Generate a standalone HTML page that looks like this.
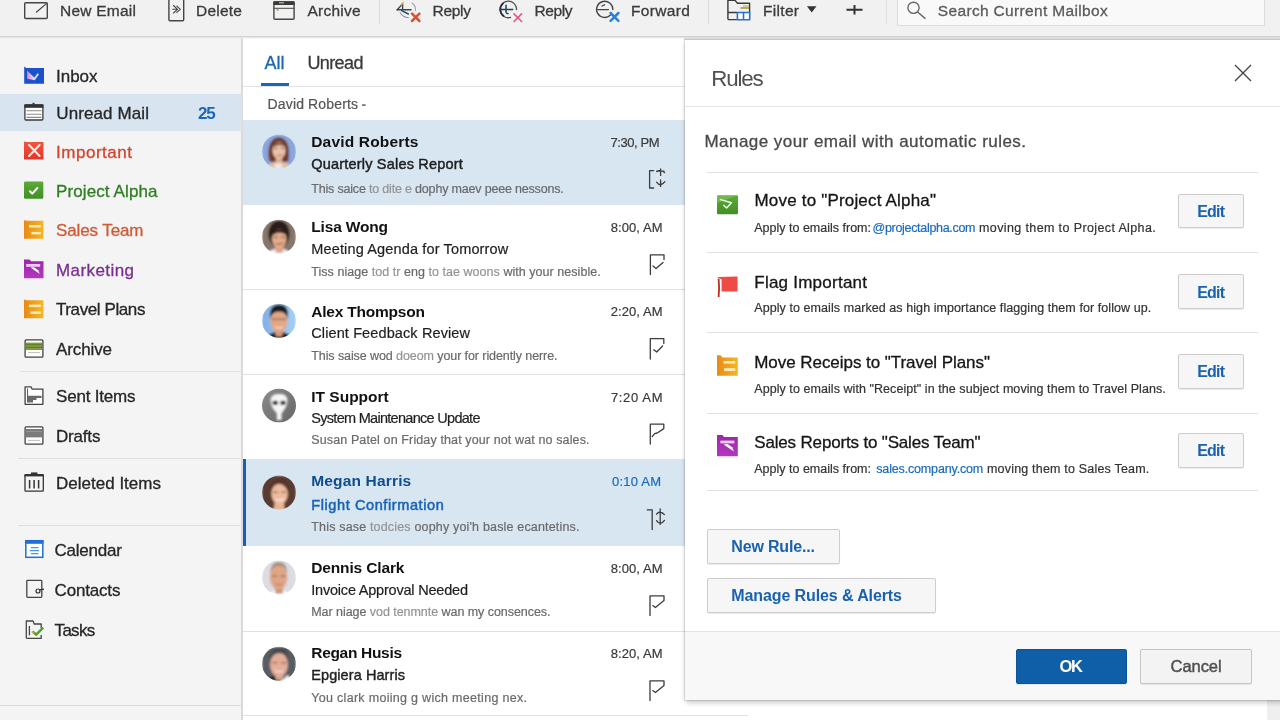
<!DOCTYPE html>
<html lang="en"><head><meta charset="utf-8"><title>Mail - Rules</title>
<style>
html,body{margin:0;padding:0}
body{width:1280px;height:720px;overflow:hidden;position:relative;background:#fff;font-family:'Liberation Sans',sans-serif}
.a{position:absolute}
.t{position:absolute;white-space:pre;line-height:1;font-family:'Liberation Sans',sans-serif}
svg{position:absolute;overflow:visible}
#toolbar{left:0;top:0;width:1280px;height:37px;background:#f1f1f1}
#tbshadow{left:0;top:36px;width:1280px;height:3px;background:linear-gradient(#cdcdcd 0,#d9d9d9 34%,rgba(232,232,232,.55) 66%,rgba(255,255,255,0) 100%)}
#sidebar{left:0;top:38px;width:242px;height:682px;background:#f4f4f4}
#sbline{left:241px;top:38px;width:2px;height:682px;background:#dadada}
#list{left:243px;top:38px;width:442px;height:682px;background:#fff}
.sep{position:absolute;height:1px;background:#e1e1e1}
.row{position:absolute;left:243px;width:442px}
.sel{background:#d8e6f2}
#dialog{left:685px;top:40px;width:600px;height:660px;background:#fff;box-shadow:0 0 0 1px rgba(0,0,0,.08),-1px 0 3px rgba(0,0,0,.07),1px 3px 5px rgba(0,0,0,.20)}
#dfoot{left:685px;top:631px;width:595px;height:69px;background:#f8f8f8;border-top:1px solid #e3e3e3;box-sizing:border-box}
.btn{position:absolute;box-sizing:border-box;background:#f6f6f6;border:1px solid #cdcdcd;border-radius:2px;box-shadow:0 1px 1px rgba(0,0,0,.08)}
.av{position:absolute;width:34px;height:34px;border-radius:50%;overflow:hidden}
#txt{position:absolute;left:0;top:0;width:1280px;height:720px;will-change:transform}
.g{color:#939393;-webkit-text-stroke-color:#939393}

</style></head>
<body>
<!-- base panes -->
<div class="a" id="sidebar"></div>
<div class="a" id="sbline"></div>
<div class="a" id="list"></div>
<div class="a" style="left:685px;top:38px;width:595px;height:682px;background:#fff"></div>
<div class="a" style="left:1267px;top:700px;width:13px;height:20px;background:#efefef"></div>
<div class="a" id="toolbar"></div>
<div class="a" style="left:684px;top:37px;width:596px;height:3px;background:linear-gradient(#d8d8d8,#e4e4e4)"></div>
<div class="a" id="tbshadow"></div>
<!-- toolbar separators / search -->
<div class="a" style="left:379px;top:0;width:1px;height:24px;background:#dcdcdc"></div>
<div class="a" style="left:708px;top:0;width:1px;height:24px;background:#dcdcdc"></div>
<div class="a" style="left:886px;top:0;width:1px;height:24px;background:#e2e2e2"></div>
<div class="a" style="left:897px;top:-2px;width:368px;height:28px;box-sizing:border-box;background:#f9f9f9;border:1px solid #dcdcdc"></div>

<!-- sidebar selection + separators -->
<div class="a" style="left:0;top:94px;width:242px;height:37px;background:#d8e5f1"></div>
<div class="sep" style="left:20px;top:371px;width:222px;background:#e0e0e0"></div>
<div class="sep" style="left:18px;top:458px;width:224px;background:#e0e0e0"></div>
<div class="sep" style="left:18px;top:525px;width:224px;background:#e0e0e0"></div>
<div class="sep" style="left:0;top:705px;width:242px;background:#dcdcdc"></div>

<!-- list -->
<div class="a" style="left:261px;top:83px;width:28px;height:3px;background:#1a66b8"></div>
<div class="sep" style="left:243px;top:86px;width:442px;background:#e2e2e2"></div>
<div class="row sel" style="top:120px;height:85px"></div>
<div class="sep" style="left:243px;top:289px;width:442px"></div>
<div class="sep" style="left:243px;top:374px;width:442px"></div>
<div class="row sel" style="top:459px;height:87px"></div>
<div class="a" style="left:243px;top:459px;width:3px;height:87px;background:#1a5fb0"></div>
<div class="sep" style="left:243px;top:631px;width:442px"></div>
<div class="sep" style="left:243px;top:715px;width:505px"></div>

<!-- dialog -->
<div class="a" id="dialog"></div>
<div class="sep" style="left:685px;top:106px;width:595px;background:#e4e4e4"></div>
<div class="sep" style="left:707px;top:172px;width:551px"></div>
<div class="sep" style="left:707px;top:252px;width:551px"></div>
<div class="sep" style="left:707px;top:332px;width:551px"></div>
<div class="sep" style="left:707px;top:413px;width:551px"></div>
<div class="sep" style="left:707px;top:490px;width:551px"></div>
<div class="a" id="dfoot"></div>
<div class="btn" style="left:1178px;top:194px;width:66px;height:34px"></div>
<div class="btn" style="left:1178px;top:274px;width:66px;height:35px"></div>
<div class="btn" style="left:1178px;top:354px;width:66px;height:35px"></div>
<div class="btn" style="left:1178px;top:433px;width:66px;height:35px"></div>
<div class="btn" style="left:707px;top:529px;width:133px;height:35px"></div>
<div class="btn" style="left:707px;top:578px;width:229px;height:35px"></div>
<div class="btn" style="left:1016px;top:649px;width:111px;height:35px;background:#0f5fa8;border-color:#0c5496"></div>
<div class="btn" style="left:1140px;top:649px;width:112px;height:35px;background:#f3f3f3;border-color:#c6c6c6"></div>
<svg style="left:1235px;top:65px" width="16" height="16" viewBox="0 0 16 16"><path d="M0 0L16 16M16 0L0 16" stroke="#444" stroke-width="1.3" fill="none"/></svg>
<svg class="a" style="left:0;top:0" width="1280" height="720" viewBox="0 0 1280 720">
<defs>
<filter id="bl" x="-10%" y="-10%" width="120%" height="120%"><feGaussianBlur stdDeviation="0.85"/></filter>
<clipPath id="cp"><circle cx="17" cy="17" r="17"/></clipPath>
<linearGradient id="gA4" x1="0" x2="1" y1="0" y2="1"><stop offset="0" stop-color="#8c8c8c"/><stop offset="1" stop-color="#666"/></linearGradient>
<linearGradient id="gA3" x1="0" x2="1" y1="0" y2="0"><stop offset="0" stop-color="#7fb0e6"/><stop offset="1" stop-color="#a8d0f2"/></linearGradient>
</defs>
<!-- 1 David Roberts -->
<g transform="translate(262,134.6)" clip-path="url(#cp)"><g filter="url(#bl)">
 <rect width="34" height="34" fill="#8aa7dd"/>
 <path d="M7 26 C4.5 11 9.5 2.6 16.6 2.6 C24 2.6 28.6 10 26.6 26 C24 29 9.5 29 7 26Z" fill="#6e3a2c"/>
 <ellipse cx="17" cy="36" rx="14" ry="9" fill="#e6c0a2"/>
 <ellipse cx="16.4" cy="33" rx="4.2" ry="5" fill="#efe4e2"/>
 <rect x="13.6" y="22" width="6.6" height="6.4" fill="#dcae94"/>
 <ellipse cx="17" cy="15.8" rx="6.5" ry="8.4" fill="#ecc2ab"/>
 <path d="M10.2 13 C11.5 7 21.5 6 23.6 12.6 C20 9.6 14 9.8 10.2 13Z" fill="#6e3a2c"/>
 <path d="M12 13.8 H15.4 M18.8 13.8 H22.2" stroke="#7a4a3c" stroke-width="1.1"/>
 <path d="M15.4 20.4 Q17.6 21.8 19.8 19.8" stroke="#b45f56" stroke-width="1.1" fill="none"/>
</g></g>
<!-- 2 Lisa Wong -->
<g transform="translate(262,219.8)" clip-path="url(#cp)"><g filter="url(#bl)">
 <rect width="34" height="34" fill="#87766b"/>
 <ellipse cx="17" cy="14" rx="10.6" ry="13.4" fill="#2a1b1a"/>
 <ellipse cx="17" cy="37" rx="14" ry="8" fill="#f3f3f6"/>
 <path d="M13 26 H21.6 L21 32 Q17.5 34.5 13.6 32Z" fill="#dfa383"/>
 <ellipse cx="17.2" cy="19" rx="7.3" ry="9.2" fill="#e4ac8c"/>
 <path d="M9 17 C9.5 8.5 24.5 7.5 25.6 17 C22 11.5 13.5 11.5 9 17Z" fill="#2a1b1a"/>
 <path d="M11.8 17.4 H15.6 M19 17.4 H22.8" stroke="#5a3a30" stroke-width="1.1"/>
 <path d="M14.2 23.4 Q17.4 25.8 20.8 23.2" stroke="#a2554c" stroke-width="1.1" fill="none"/>
</g></g>
<!-- 3 Alex Thompson -->
<g transform="translate(262,303.8)" clip-path="url(#cp)"><g filter="url(#bl)">
 <rect width="34" height="34" fill="url(#gA3)"/>
 <ellipse cx="17" cy="37" rx="14" ry="9" fill="#1e2227"/>
 <path d="M12.6 26 H21.4 L20 32.6 H14Z" fill="#d89a78"/>
 <ellipse cx="16.8" cy="17.6" rx="8.5" ry="10.8" fill="#e3a785"/>
 <path d="M8 15 C7 4 12 0.8 17 0.8 C23 0.8 27 4 25.8 15 C24.5 9.6 21 8 17 8 C13 8 9.4 9.6 8 15Z" fill="#1e1e21"/>
 <path d="M9.6 15.4 H15.2 M18.6 15.4 H24.4 M15.2 15.4 H18.6" stroke="#7a523f" stroke-width="1"/>
 <path d="M13.4 23 Q16.8 25.6 20.6 23" stroke="#f6e6dc" stroke-width="1.3" fill="none"/>
</g></g>
<!-- 4 IT Support -->
<g transform="translate(262,388.6)" clip-path="url(#cp)">
 <rect width="34" height="34" fill="url(#gA4)"/>
 <g filter="url(#bl)">
 <path d="M8.6 12 C8.6 7 12 5.4 17 5.4 C22.5 5.4 25.4 7 25.4 12 C25.4 18 21.5 22 19.6 25 V31.4 H14.8 V25 C12.5 22 8.6 18 8.6 12Z" fill="#f6f6f6"/>
 <rect x="10.4" y="12.2" width="5.6" height="4.2" rx="1.9" fill="#1c1c1c"/>
 <rect x="18.2" y="12.2" width="5.6" height="4.2" rx="1.9" fill="#1c1c1c"/>
 </g>
</g>
<!-- 5 Megan Harris -->
<g transform="translate(262,475.6)" clip-path="url(#cp)"><g filter="url(#bl)">
 <rect width="34" height="34" fill="#5a3a30"/>
 <path d="M12.6 27 H22 L22.6 35 H11.6Z" fill="#e8b494"/>
 <ellipse cx="17.6" cy="18.2" rx="8.2" ry="11" fill="#ecba9c"/>
 <path d="M7.6 20 C6.5 7 13 3 18 3 C24.5 3 28.8 9 27.4 21 C25.5 12.5 21.5 8.4 17 8.4 C12.6 8.4 9.6 12 7.6 20Z" fill="#58362c"/>
 <path d="M11.4 16.6 H15.6 M19.6 16.6 H23.8" stroke="#6a4034" stroke-width="1.1"/>
 <path d="M13.4 23.2 Q17.6 26.6 21.8 23" stroke="#fbeee8" stroke-width="1.4" fill="none"/>
</g></g>
<!-- 6 Dennis Clark -->
<g transform="translate(262,560.4)" clip-path="url(#cp)"><g filter="url(#bl)">
 <rect width="34" height="34" fill="#dcdce2"/>
 <ellipse cx="17" cy="38" rx="14" ry="8" fill="#f6f7fa"/>
 <path d="M12.6 26 H21.4 L20.4 33.4 H13.8Z" fill="#d2946f"/>
 <ellipse cx="16.6" cy="17" rx="8.8" ry="12.2" fill="#dfa686"/>
 <path d="M8.4 13 C8 4.5 12.6 1.6 16.6 1.6 C21.5 1.6 25.4 4.5 24.8 13 C23.5 7.4 20.5 5.6 16.6 5.6 C13 5.6 9.8 7.4 8.4 13Z" fill="#a8917e"/>
 <path d="M10 15.6 H15.2 M18.4 15.6 H23.6" stroke="#8a5a44" stroke-width="1.1"/>
 <path d="M13 23.2 Q16.6 25.8 20.4 23.2" stroke="#b56d58" stroke-width="1.1" fill="none"/>
</g></g>
<!-- 7 Regan Husis -->
<g transform="translate(262,646.8)" clip-path="url(#cp)"><g filter="url(#bl)">
 <rect width="34" height="34" fill="#585c63"/>
 <ellipse cx="15" cy="38" rx="14" ry="9" fill="#25272c"/>
 <path d="M17 36 L26 28 L30 36Z" fill="#f2f3f6"/>
 <path d="M12.6 26 H22 L21 32.6 Q17 34.5 13.6 32.6Z" fill="#d8a088"/>
 <ellipse cx="17" cy="18" rx="9" ry="12" fill="#e4ae98"/>
 <path d="M8 14 C7.6 4 12.6 0.6 17.4 0.6 C23 0.6 27 4 26.2 14 C24.6 8 21.4 6.4 17.4 6.4 C13.6 6.4 9.8 8 8 14Z" fill="#4a4a4f"/>
 <path d="M10 16 H15.4 M19 16 H24.4" stroke="#7a5246" stroke-width="1.1"/>
 <path d="M13.2 23.6 Q17 26.2 21 23.6" stroke="#f6ebe6" stroke-width="1.2" fill="none"/>
</g></g>
</svg>
<svg class="a" style="left:0;top:0" width="1280" height="720" viewBox="0 0 1280 720">
<defs>
<linearGradient id="gOr" x1="0" x2="1" y1="0" y2="0"><stop offset="0" stop-color="#e88a18"/><stop offset="1" stop-color="#f6b622"/></linearGradient>
<linearGradient id="gRed" x1="0" x2="0" y1="0" y2="1"><stop offset="0" stop-color="#f2563f"/><stop offset="1" stop-color="#e2352b"/></linearGradient>
<linearGradient id="gGr" x1="0" x2="0" y1="0" y2="1"><stop offset="0" stop-color="#5aab36"/><stop offset="1" stop-color="#3f8f26"/></linearGradient>
<linearGradient id="gPu" x1="0" x2="0" y1="0" y2="1"><stop offset="0" stop-color="#9a28a8"/><stop offset="1" stop-color="#b436c0"/></linearGradient>
<linearGradient id="gPk" x1="0" x2="1" y1="0" y2="0"><stop offset="0" stop-color="#e08ad6"/><stop offset=".55" stop-color="#f4e4fb"/><stop offset="1" stop-color="#ffffff"/></linearGradient>
</defs>
<!-- ===== toolbar icons ===== -->
<g fill="none" stroke="#454545" stroke-width="1.4" stroke-linecap="round" stroke-linejoin="round">
 <rect x="24.7" y="2.7" width="22.6" height="15.8" rx="1"/>
 <path d="M36.5 12 L46.5 3.6" stroke-width="1.2"/>
 <rect x="168.9" y="-1" width="14.8" height="21.7" rx="1"/>
 <path d="M173.5 5.5 L177.5 9.3 L173.5 13 M176.8 6.2 L180.3 9.3 L176.8 12.4 M172.8 9.3 H177" stroke-width="1.1"/>
 <rect x="273.9" y="2" width="20.2" height="17.3" rx="1"/>
 <path d="M274 8.3 H294" stroke-width="1"/>
</g>
<rect x="273.4" y="1.3" width="21.2" height="3.7" fill="#3a3a3a"/>
<rect x="279" y="2.2" width="5" height="1.2" fill="#bbb"/>
<circle cx="277.6" cy="9.8" r="1.1" fill="#8db82c"/>
<!-- reply 1 -->
<g fill="none" stroke-linecap="round">
 <path d="M412 3 Q416.2 6 415.4 10.6" stroke="#9aa2aa" stroke-width="1.1"/>
 <path d="M400.2 12.8 Q403 17.4 408.4 17.8" stroke="#8a939b" stroke-width="1.1"/>
 <path d="M397.2 9.8 H411" stroke="#2f4858" stroke-width="1.5"/>
 <path d="M397.2 9.8 L402.6 3.9 V9.4" stroke="#2f4858" stroke-width="1.4" stroke-linejoin="round"/>
 <path d="M401.6 10.6 L408.4 14" stroke="#2f4858" stroke-width="1.4"/>
 <path d="M401.4 4.8 L403.2 2.8" stroke="#e8a23a" stroke-width="1.6"/>
 <path d="M412 13.6 L419.4 21 M419.4 13.6 L412 21" stroke="#d9532f" stroke-width="2.5"/>
</g>
<!-- reply 2 -->
<g fill="none" stroke-linecap="round">
 <path d="M516.6 9.6 A8.3 8.3 0 1 0 510.6 17.4" stroke="#4a4f55" stroke-width="1.3"/>
 <path d="M503 3.4 A8.3 8.3 0 0 0 503.6 16" stroke="#2c2f33" stroke-width="1.7"/>
 <path d="M500.4 9.5 H512.8" stroke="#2c3e4c" stroke-width="1.4"/>
 <path d="M506 5.4 V12 Q506.2 13.6 508 13.6" stroke="#1f4d66" stroke-width="1.6"/>
 <path d="M514 13.9 L521.6 21.5 M521.6 13.9 L514 21.5" stroke="#da5a86" stroke-width="1.6"/>
</g>
<!-- forward -->
<g fill="none" stroke-linecap="round">
 <path d="M610.5 15 A8.1 8.1 0 1 1 612.8 9.6" stroke="#454545" stroke-width="1.4"/>
 <path d="M597.5 9.6 H608.5 M602 6 L604.5 4.8" stroke="#454545" stroke-width="1.3"/>
 <path d="M610.6 13 L618.4 20.8 M618.4 13 L610.6 20.8" stroke="#2a80dc" stroke-width="2.5"/>
</g>
<!-- filter -->
<g fill="none" stroke-linejoin="round">
 <path d="M727.9 19.6 V0.4 H735 L737.5 3.2 H749.6 V12.5" stroke="#3a3a3a" stroke-width="1.4"/>
 <path d="M727.9 12.5 H737 M727.9 19.6 H737" stroke="#3a3a3a" stroke-width="1.4"/>
 <rect x="737.4" y="12.5" width="12.3" height="7.2" stroke="#2b6fd2" stroke-width="1.6" fill="#fff"/>
 <path d="M743.5 12.5 V19.7" stroke="#2b6fd2" stroke-width="1.6"/>
 <path d="M740.5 8 H749" stroke="#9a9a32" stroke-width="1.5"/>
 <path d="M743 6 H749" stroke="#c9a23a" stroke-width="1"/>
</g>
<polygon points="806.9,6.3 816.5,6.3 811.7,12.6" fill="#333"/>
<path d="M846.5 9.8 H862.5 M854.5 5 V14.5" stroke="#333" stroke-width="2" fill="none"/>
<g fill="none" stroke="#676767" stroke-width="1.4" stroke-linecap="round"><circle cx="913.5" cy="7.8" r="5.6"/><path d="M917.6 12 L925 18.4"/></g>

<!-- ===== sidebar icons ===== -->
<!-- inbox -->
<path d="M24.2 66.6 L26.4 68 H44 V83.8 H24.2 Z" fill="#1a52cb"/>
<path d="M27 70.6 L34.4 77.4 L37.6 73.2 L38.9 74.2 L34.8 80.3 L27.2 78.8 Z" fill="url(#gPk)" fill-opacity=".9"/>
<!-- unread mail -->
<g>
 <rect x="24.9" y="105" width="18" height="15" rx="1" fill="#fff" stroke="#3a3a3a" stroke-width="1.3"/>
 <rect x="24.3" y="104.4" width="19.2" height="3.4" fill="#333"/>
 <rect x="32.5" y="102.8" width="2" height="2" fill="#333"/>
 <path d="M26.5 110.8 H41.5 M26.5 114.2 H41.5 M26.5 117.4 H41.5" stroke="#8a8a8a" stroke-width="1.1"/>
</g>
<!-- important -->
<path d="M24 141.6 L26.5 142 H43.5 V159.5 H24 Z" fill="url(#gRed)"/>
<path d="M29 145 L39.6 156 M39.6 145 L29 156" stroke="#fff" stroke-width="2" stroke-linecap="round" opacity=".92"/>
<!-- project alpha -->
<rect x="24" y="181.6" width="19.3" height="17.2" rx="1.2" fill="url(#gGr)"/>
<path d="M30 191.3 L32.2 193.6 L37.4 188" stroke="#fff" stroke-width="2" fill="none" stroke-linecap="round" stroke-linejoin="round"/>
<!-- sales team -->
<path d="M24 220.2 L27 220.8 H43.4 V238.8 H24 Z" fill="url(#gOr)"/>
<rect x="29" y="225" width="11.8" height="2.5" fill="#fdeab5"/><rect x="31.4" y="231.9" width="9.4" height="2.5" fill="#fdeab5"/>
<!-- marketing -->
<path d="M24 259.6 H29.5 L31 261.2 H43.5 V278.2 H24 Z" fill="url(#gPu)"/>
<rect x="26.2" y="264" width="14" height="2.8" fill="#f0c8f2"/>
<path d="M30.5 267.5 L39.8 274 L38.2 270.2 L34 267.2 Z" fill="#fff"/>
<!-- travel plans -->
<path d="M24 299.6 L27 300.2 H43.4 V318.3 H24 Z" fill="url(#gOr)"/>
<rect x="29" y="304.6" width="11.8" height="2.5" fill="#fdeab5"/><rect x="30.4" y="311.4" width="10.4" height="2.5" fill="#fdeab5"/>
<!-- archive -->
<rect x="25.1" y="339.9" width="17.8" height="17.3" rx="1" fill="#fff" stroke="#414141" stroke-width="1.3"/>
<rect x="26" y="342.6" width="16" height="7.4" fill="#7f9c3c"/>
<path d="M26 344.6 H42 M26 347.4 H42" stroke="#5e7d2a" stroke-width="1"/>
<path d="M28 352.6 H40" stroke="#bdbdbd" stroke-width="1"/>
<!-- sent items -->
<path d="M25.1 404.3 V386.8 H31 L32.2 389.2 H42.9 V404.3 Z" fill="#fff" stroke="#414141" stroke-width="1.3" stroke-linejoin="round"/>
<path d="M27.6 388.5 V402.5" stroke="#555" stroke-width="1"/>
<path d="M28 395.8 H41.6 V398 H36.5 V400 H33 V402.4 H28 Z" fill="#6a6a6a"/>
<!-- drafts -->
<rect x="25.1" y="426.8" width="17.8" height="17.4" rx="1" fill="#fff" stroke="#414141" stroke-width="1.3"/>
<rect x="26" y="429" width="16" height="8.4" fill="#7b7b7b"/>
<path d="M26 431.5 H42" stroke="#949494" stroke-width="1"/>
<path d="M28 440.4 H40" stroke="#bdbdbd" stroke-width="1"/>
<!-- deleted items -->
<rect x="25" y="474.6" width="18.3" height="16.6" rx="1" fill="none" stroke="#333" stroke-width="1.3"/>
<path d="M24.4 475.4 H43.9" stroke="#333" stroke-width="2"/>
<path d="M31 473.2 H37.4" stroke="#333" stroke-width="1.6"/>
<path d="M29.6 480 V488.4 M34.1 480 V488.4 M38.6 480 V488.4" stroke="#333" stroke-width="1.5"/>
<!-- calendar -->
<rect x="25.8" y="540.7" width="17" height="16.6" fill="#fff" stroke="#1f6fd6" stroke-width="1.5"/>
<rect x="25.1" y="540" width="18.4" height="3.8" fill="#1f6fd6"/>
<path d="M31 547.6 H38.4 M29.8 550.6 H39.2 M31 553.6 H38.4" stroke="#4a93e6" stroke-width="1.3"/>
<!-- contacts -->
<rect x="26.8" y="580.4" width="15" height="17" rx="0.8" fill="none" stroke="#444" stroke-width="1.3"/>
<circle cx="38" cy="591" r="2" fill="#f4f4f4" stroke="#333" stroke-width="1.2"/>
<path d="M39 589.8 L44 589.2" stroke="#333" stroke-width="1.3"/>
<!-- tasks -->
<path d="M26.3 638.3 V621 H33 L34.2 624 H41.2 V628 M41.2 635 V638.3 H26.3" fill="none" stroke="#444" stroke-width="1.3" stroke-linejoin="round"/>
<path d="M29.4 626 V635.4" stroke="#444" stroke-width="1.3"/>
<path d="M32.4 631.6 L36.2 634.6 L43.2 627.6" fill="none" stroke="#5a9e2e" stroke-width="2.6"/>
<path d="M31.8 631.4 L34 633" fill="none" stroke="#c9b43a" stroke-width="1.6"/>

<!-- ===== message flags ===== -->
<g fill="none" stroke="#3c3c3c" stroke-width="1.3" stroke-linecap="round" stroke-linejoin="round">
 <!-- row1 -->
 <path d="M653.6 170.6 H649.6 V188 H653.6"/>
 <path d="M660.6 169 V175.4 M657 171.6 Q660.6 168.6 664.6 172.6 M656.6 171.2 H664"/>
 <path d="M660.6 180 V186.4 M656.6 182.2 Q660.6 187.6 664.8 181.6"/>
 <!-- flags rows 2,3,4,6,7 -->
 <path d="M650.4 274.6 V254.8 H664 V259.6 M653 266 L656 268.6 L663 262.4"/>
 <path d="M650.3 359 V338.6 H663.8 V343.6 M653.8 349.8 L656.7 352 L662.6 346"/>
 <path d="M650.3 444 V424.2 H663.8 V428.6 L657.2 433 L654.6 433.6 L652.2 436.6"/>
 <path d="M650 615.4 V595.9 H664 V600.4 L655.4 607.6 L652.8 605.6"/>
 <path d="M650 700.6 V680.9 H664 V685.4 L655.4 692.6 L652.8 690.6"/>
 <!-- row5 -->
 <path d="M647.2 509.8 H652.2 V529.6"/>
 <path d="M660.2 509 V524.6 M656.6 514.2 Q659.6 509.6 664.4 514.6 M656.6 520.6 Q660.2 526.4 664.4 520.4"/>
</g>

<!-- ===== rule icons ===== -->
<rect x="717" y="195.3" width="21" height="19" rx="1.2" fill="url(#gGr)"/>
<path d="M717 195.3 H738 L717 203 Z" fill="#8fd070" opacity=".45"/>
<path d="M720.5 199.6 L731.4 202.8 L726.6 208 L723.8 205.4" fill="none" stroke="#fff" stroke-opacity=".9" stroke-width="1.5" stroke-linejoin="round" stroke-linecap="round"/>
<path d="M717 277 L737.6 276.4 V291.6 H721.6 V279.6 Z" fill="#ee4b45"/>
<path d="M718.6 278.6 Q719.6 288 718.6 297" fill="none" stroke="#bf2a20" stroke-width="1.8"/>
<path d="M717 355.2 H720.5 L722.5 357.4 H737.8 V375.8 H717 Z" fill="url(#gOr)"/>
<rect x="723.6" y="361" width="11.6" height="2.6" fill="#fdeab5"/><rect x="724" y="368.2" width="11.2" height="2.8" fill="#fdeab5"/>
<path d="M717 435 H722.5 L724 437 H737.8 V456.3 H717 Z" fill="url(#gPu)"/>
<rect x="720.4" y="440.6" width="14" height="2.8" fill="#f0c8f2"/>
<path d="M723.5 444.4 L734 451.6 L732.2 447.2 L727.6 444 Z" fill="#fff"/>
</svg>

<!-- text layer -->
<div id="txt">
<span class="t" style="left:60.00px;top:3.00px;font-size:15.5px;letter-spacing:0.240px;color:#3a3a3a;-webkit-text-stroke:0.3px #3a3a3a;">New Email</span>
<span class="t" style="left:196.00px;top:3.00px;font-size:15.5px;letter-spacing:0.237px;color:#3a3a3a;-webkit-text-stroke:0.3px #3a3a3a;">Delete</span>
<span class="t" style="left:307.50px;top:3.00px;font-size:15.5px;letter-spacing:0.219px;color:#3a3a3a;-webkit-text-stroke:0.3px #3a3a3a;">Archive</span>
<span class="t" style="left:432.50px;top:3.00px;font-size:15.5px;letter-spacing:-0.285px;color:#3a3a3a;-webkit-text-stroke:0.3px #3a3a3a;">Reply</span>
<span class="t" style="left:534.50px;top:3.00px;font-size:15.5px;letter-spacing:-0.410px;color:#3a3a3a;-webkit-text-stroke:0.3px #3a3a3a;">Reply</span>
<span class="t" style="left:631.00px;top:3.00px;font-size:15.5px;letter-spacing:0.357px;color:#3a3a3a;-webkit-text-stroke:0.3px #3a3a3a;">Forward</span>
<span class="t" style="left:763.00px;top:3.00px;font-size:15.5px;letter-spacing:0.309px;color:#3a3a3a;-webkit-text-stroke:0.3px #3a3a3a;">Filter</span>
<span class="t" style="left:937.80px;top:3.00px;font-size:15.5px;letter-spacing:0.337px;color:#5a5a5a;-webkit-text-stroke:0.3px #5a5a5a;">Search Current Mailbox</span>
<span class="t" style="left:56.00px;top:68.00px;font-size:17px;letter-spacing:-0.023px;color:#262626;-webkit-text-stroke:0.3px #262626;">Inbox</span>
<span class="t" style="left:56.30px;top:105.00px;font-size:17px;letter-spacing:0.104px;color:#262626;-webkit-text-stroke:0.3px #262626;">Unread Mail</span>
<span class="t" style="left:198.00px;top:105.00px;font-size:17px;letter-spacing:-1.322px;color:#1a66b8;font-weight:700;">25</span>
<span class="t" style="left:56.00px;top:144.00px;font-size:17px;letter-spacing:0.523px;color:#d4432c;-webkit-text-stroke:0.3px #d4432c;">Important</span>
<span class="t" style="left:56.00px;top:183.00px;font-size:17px;letter-spacing:0.109px;color:#2f7d22;-webkit-text-stroke:0.3px #2f7d22;">Project Alpha</span>
<span class="t" style="left:56.00px;top:222.00px;font-size:17px;letter-spacing:-0.113px;color:#d05a36;-webkit-text-stroke:0.3px #d05a36;">Sales Team</span>
<span class="t" style="left:56.00px;top:262.00px;font-size:17px;letter-spacing:0.420px;color:#7a2d92;-webkit-text-stroke:0.3px #7a2d92;">Marketing</span>
<span class="t" style="left:56.00px;top:301.00px;font-size:17px;letter-spacing:-0.405px;color:#262626;-webkit-text-stroke:0.3px #262626;">Travel Plans</span>
<span class="t" style="left:56.00px;top:341.00px;font-size:17px;letter-spacing:-0.115px;color:#262626;-webkit-text-stroke:0.3px #262626;">Archive</span>
<span class="t" style="left:56.00px;top:388.00px;font-size:17px;letter-spacing:-0.196px;color:#262626;-webkit-text-stroke:0.3px #262626;">Sent Items</span>
<span class="t" style="left:56.00px;top:428.00px;font-size:17px;letter-spacing:-0.189px;color:#262626;-webkit-text-stroke:0.3px #262626;">Drafts</span>
<span class="t" style="left:56.00px;top:475.00px;font-size:17px;letter-spacing:0.009px;color:#262626;-webkit-text-stroke:0.3px #262626;">Deleted Items</span>
<span class="t" style="left:54.40px;top:542.00px;font-size:17px;letter-spacing:-0.200px;color:#262626;-webkit-text-stroke:0.3px #262626;">Calendar</span>
<span class="t" style="left:54.60px;top:582.00px;font-size:17px;letter-spacing:-0.185px;color:#262626;-webkit-text-stroke:0.3px #262626;">Contacts</span>
<span class="t" style="left:54.60px;top:622.00px;font-size:17px;letter-spacing:-0.717px;color:#262626;-webkit-text-stroke:0.3px #262626;">Tasks</span>
<span class="t" style="left:264.40px;top:54.00px;font-size:18px;letter-spacing:0.092px;color:#1a66b8;-webkit-text-stroke:0.3px #1a66b8;">All</span>
<span class="t" style="left:307.50px;top:54.00px;font-size:18px;letter-spacing:-0.629px;color:#3a3a3a;-webkit-text-stroke:0.3px #3a3a3a;">Unread</span>
<span class="t" style="left:267.60px;top:97.00px;font-size:14px;letter-spacing:0.141px;color:#555;-webkit-text-stroke:0.2px #555;">David Roberts</span>
<span class="t" style="left:361.50px;top:97.00px;font-size:14px;letter-spacing:1.328px;color:#777;font-weight:700;">-</span>
<span class="t" style="left:311.25px;top:134.00px;font-size:15.5px;letter-spacing:0.180px;color:#111;font-weight:700;">David Roberts</span>
<span class="t" style="left:311.25px;top:157.00px;font-size:14.5px;letter-spacing:0.194px;color:#1e1e1e;-webkit-text-stroke:0.45px #1e1e1e;">Quarterly Sales Report</span>
<span class="t" style="left:311.25px;top:183.00px;font-size:12.5px;letter-spacing:-0.184px;color:#6a6a6a;-webkit-text-stroke:0.2px #6a6a6a;">This saice <span class="g">to dite e</span> dophy maev peee nessons.</span>
<span class="t" style="left:610.50px;top:136.00px;font-size:13px;letter-spacing:-0.433px;color:#3a3a3a;-webkit-text-stroke:0.2px #3a3a3a;">7:30, PM</span>
<span class="t" style="left:311.25px;top:219.00px;font-size:15.5px;letter-spacing:-0.166px;color:#111;font-weight:700;">Lisa Wong</span>
<span class="t" style="left:311.25px;top:242.00px;font-size:14.5px;letter-spacing:0.147px;color:#1e1e1e;-webkit-text-stroke:0.2px #1e1e1e;">Meeting Agenda for Tomorrow</span>
<span class="t" style="left:311.25px;top:266.00px;font-size:12.5px;letter-spacing:0.043px;color:#6a6a6a;-webkit-text-stroke:0.2px #6a6a6a;">Tiss niage <span class="g">tod tr</span> eng <span class="g">to tae woons</span> with your nesible.</span>
<span class="t" style="left:610.75px;top:221.00px;font-size:13px;letter-spacing:0.062px;color:#3a3a3a;-webkit-text-stroke:0.2px #3a3a3a;">8:00, AM</span>
<span class="t" style="left:311.25px;top:304.00px;font-size:15.5px;letter-spacing:-0.210px;color:#111;font-weight:700;">Alex Thompson</span>
<span class="t" style="left:311.25px;top:326.00px;font-size:14.5px;letter-spacing:0.114px;color:#1e1e1e;-webkit-text-stroke:0.2px #1e1e1e;">Client Feedback Review</span>
<span class="t" style="left:311.25px;top:350.00px;font-size:12.5px;letter-spacing:-0.088px;color:#6a6a6a;-webkit-text-stroke:0.2px #6a6a6a;">This saise wod <span class="g">doeom</span> your for ridently nerre.</span>
<span class="t" style="left:610.80px;top:305.00px;font-size:13px;letter-spacing:0.055px;color:#3a3a3a;-webkit-text-stroke:0.2px #3a3a3a;">2:20, AM</span>
<span class="t" style="left:311.25px;top:389.00px;font-size:15.5px;letter-spacing:0.000px;color:#111;font-weight:700;">IT Support</span>
<span class="t" style="left:311.25px;top:411.00px;font-size:14.5px;letter-spacing:-0.706px;color:#1e1e1e;-webkit-text-stroke:0.2px #1e1e1e;">System Maintenance Update</span>
<span class="t" style="left:311.25px;top:434.00px;font-size:12.5px;letter-spacing:0.122px;color:#6a6a6a;-webkit-text-stroke:0.2px #6a6a6a;">Susan Patel on Friday that your not wat no sales.</span>
<span class="t" style="left:611.00px;top:391.00px;font-size:13px;letter-spacing:0.633px;color:#3a3a3a;-webkit-text-stroke:0.2px #3a3a3a;">7:20 AM</span>
<span class="t" style="left:311.25px;top:473.00px;font-size:15.5px;letter-spacing:0.163px;color:#0f4c8f;font-weight:700;">Megan Harris</span>
<span class="t" style="left:311.25px;top:498.00px;font-size:14.5px;letter-spacing:0.601px;color:#1763b4;-webkit-text-stroke:0.5px #1763b4;">Flight Confirmation</span>
<span class="t" style="left:311.25px;top:521.00px;font-size:12.5px;letter-spacing:0.175px;color:#6a6a6a;-webkit-text-stroke:0.2px #6a6a6a;">This sase <span class="g">todcies</span> oophy yoi&#x27;h basle ecantetins.</span>
<span class="t" style="left:612.00px;top:475.00px;font-size:13px;letter-spacing:0.216px;color:#1b6ac0;-webkit-text-stroke:0.2px #1b6ac0;">0:10 AM</span>
<span class="t" style="left:311.25px;top:560.00px;font-size:15.5px;letter-spacing:-0.138px;color:#111;font-weight:700;">Dennis Clark</span>
<span class="t" style="left:311.25px;top:583.00px;font-size:14.5px;letter-spacing:-0.204px;color:#1e1e1e;-webkit-text-stroke:0.2px #1e1e1e;">Invoice Approval Needed</span>
<span class="t" style="left:311.25px;top:606.00px;font-size:12.5px;letter-spacing:-0.049px;color:#6a6a6a;-webkit-text-stroke:0.2px #6a6a6a;">Mar niage <span class="g">vod tenmnte</span> wan my consences.</span>
<span class="t" style="left:610.75px;top:562.00px;font-size:13px;letter-spacing:0.062px;color:#3a3a3a;-webkit-text-stroke:0.2px #3a3a3a;">8:00, AM</span>
<span class="t" style="left:311.25px;top:645.00px;font-size:15.5px;letter-spacing:-0.314px;color:#111;font-weight:700;">Regan Husis</span>
<span class="t" style="left:311.25px;top:668.00px;font-size:14.5px;letter-spacing:0.083px;color:#1e1e1e;-webkit-text-stroke:0.4px #1e1e1e;">Epgiera Harris</span>
<span class="t" style="left:311.25px;top:692.00px;font-size:12.5px;letter-spacing:0.301px;color:#6a6a6a;-webkit-text-stroke:0.2px #6a6a6a;">You clark moiing g wich meeting nex.</span>
<span class="t" style="left:610.75px;top:647.00px;font-size:13px;letter-spacing:0.062px;color:#3a3a3a;-webkit-text-stroke:0.2px #3a3a3a;">8:20, AM</span>
<span class="t" style="left:711.25px;top:68.00px;font-size:22.3px;letter-spacing:-1.129px;color:#505050;">Rules</span>
<span class="t" style="left:704.50px;top:133.00px;font-size:17px;letter-spacing:0.454px;color:#4a4a4a;-webkit-text-stroke:0.3px #4a4a4a;">Manage your email with automatic rules.</span>
<span class="t" style="left:754.50px;top:192.00px;font-size:17px;letter-spacing:0.185px;color:#151515;-webkit-text-stroke:0.3px #151515;">Move to &quot;Project Alpha&quot;</span>
<span class="t" style="left:754.25px;top:274.00px;font-size:17px;letter-spacing:0.242px;color:#151515;-webkit-text-stroke:0.3px #151515;">Flag Important</span>
<span class="t" style="left:754.25px;top:354.00px;font-size:17px;letter-spacing:-0.052px;color:#151515;-webkit-text-stroke:0.3px #151515;">Move Receips to &quot;Travel Plans&quot;</span>
<span class="t" style="left:754.25px;top:434.00px;font-size:17px;letter-spacing:-0.169px;color:#151515;-webkit-text-stroke:0.3px #151515;">Sales Reports to &quot;Sales Team&quot;</span>
<span class="t" style="left:754.25px;top:222.00px;font-size:12.5px;letter-spacing:0.002px;color:#333;-webkit-text-stroke:0.2px #333;">Apply to emails from:</span>
<span class="t" style="left:872.50px;top:222.00px;font-size:12.5px;letter-spacing:-0.306px;color:#1a6bbf;-webkit-text-stroke:0.2px #1a6bbf;">@projectalpha.com</span>
<span class="t" style="left:979.00px;top:222.00px;font-size:12.5px;letter-spacing:0.382px;color:#333;-webkit-text-stroke:0.2px #333;">moving them to Project Alpha.</span>
<span class="t" style="left:754.25px;top:302.00px;font-size:12.5px;letter-spacing:0.074px;color:#333;-webkit-text-stroke:0.2px #333;">Apply to emails marked as high importance flagging them for follow up.</span>
<span class="t" style="left:754.25px;top:383.00px;font-size:12.5px;letter-spacing:0.062px;color:#333;-webkit-text-stroke:0.2px #333;">Apply to emails with &quot;Receipt&quot; in the subject moving them to Travel Plans.</span>
<span class="t" style="left:754.25px;top:463.00px;font-size:12.5px;letter-spacing:0.002px;color:#333;-webkit-text-stroke:0.2px #333;">Apply to emails from:</span>
<span class="t" style="left:876.25px;top:463.00px;font-size:12.5px;letter-spacing:-0.159px;color:#1a6bbf;-webkit-text-stroke:0.2px #1a6bbf;">sales.company.com</span>
<span class="t" style="left:987.00px;top:463.00px;font-size:12.5px;letter-spacing:0.191px;color:#333;-webkit-text-stroke:0.2px #333;">moving them to Sales Team.</span>
<span class="t" style="left:1197.25px;top:204.00px;font-size:16px;letter-spacing:-0.823px;color:#1a62b0;font-weight:700;">Edit</span>
<span class="t" style="left:1197.25px;top:285.00px;font-size:16px;letter-spacing:-0.823px;color:#1a62b0;font-weight:700;">Edit</span>
<span class="t" style="left:1197.25px;top:364.00px;font-size:16px;letter-spacing:-0.823px;color:#1a62b0;font-weight:700;">Edit</span>
<span class="t" style="left:1197.25px;top:443.00px;font-size:16px;letter-spacing:-0.823px;color:#1a62b0;font-weight:700;">Edit</span>
<span class="t" style="left:731.25px;top:539.00px;font-size:16px;letter-spacing:-0.161px;color:#1a62b0;font-weight:700;">New Rule...</span>
<span class="t" style="left:731.25px;top:588.00px;font-size:16px;letter-spacing:-0.102px;color:#1a62b0;font-weight:700;">Manage Rules &amp; Alerts</span>
<span class="t" style="left:1059.50px;top:658.00px;font-size:16.5px;letter-spacing:-1.250px;color:#fff;font-weight:700;">OK</span>
<span class="t" style="left:1170.60px;top:658.00px;font-size:16.5px;letter-spacing:-0.075px;color:#505050;-webkit-text-stroke:0.45px #505050;">Cancel</span>
</div>
</body></html>
